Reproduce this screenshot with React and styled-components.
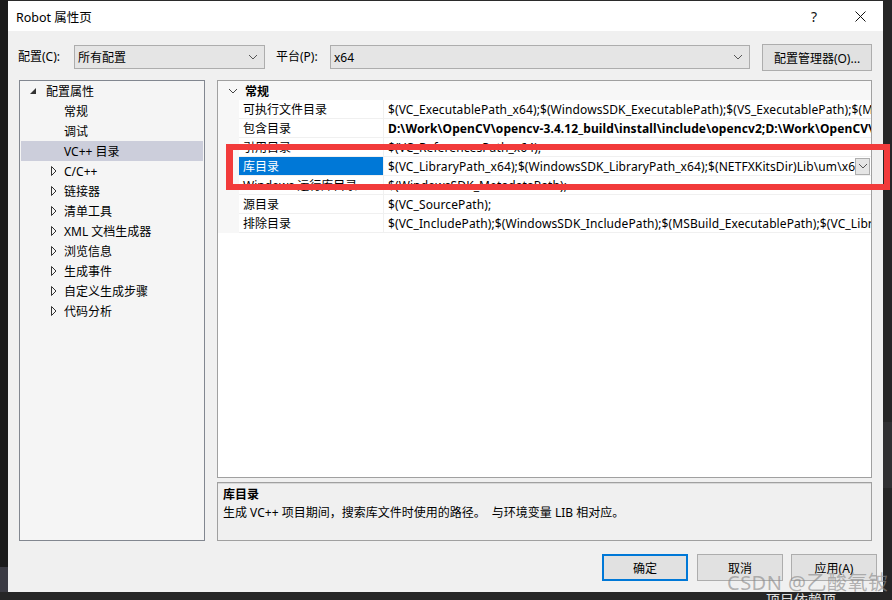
import React from 'react';
import styled, { createGlobalStyle } from 'styled-components';

const Global = createGlobalStyle`
  html, body { margin: 0; padding: 0; background: #1e1e1e; }
  body { font-family: "Noto Sans", "Noto Sans CJK SC", sans-serif; font-size: 12px; color: #000; }
  #root { width: 892px; height: 600px; overflow: hidden; }
`;

const Screen = styled.div`
  position: relative;
  width: 892px;
  height: 600px;
  display: grid;
  grid-template-columns: 8px 875px 1fr;
  grid-template-rows: 592px 8px;
  background: #1e1e1e;
  overflow: hidden;
`;

const LeftStrip = styled.div`
  background: linear-gradient(to bottom, #1b1b1b 0, #1b1b1b 567px, #3b3b43 567px, #3b3b43 100%);
`;

const RightStrip = styled.div`
  background: linear-gradient(to bottom, #262626 0, #262626 422px, #303032 422px, #303032 488px, #262626 488px);
`;

const BottomStrip = styled.div`
  grid-column: 1 / 4;
  background: #262626;
  overflow: hidden;
  padding-left: 766px;
  color: #e0e0e0;
  font-size: 14px;
  line-height: 14px;
`;

const BottomText = styled.div`
  margin-top: 1px;
`;

const Dialog = styled.div`
  display: flex;
  flex-direction: column;
  background: #f0f0f0;
  border-top: 1px solid #2b2b2b;
`;

const TitleBar = styled.div`
  height: 30px;
  background: #fff;
  display: flex;
  align-items: center;
  padding-left: 8px;
  font-size: 12.5px;
`;

const TitleText = styled.div`
  flex: 1;
`;

const TitleButton = styled.div`
  width: 46px;
  height: 30px;
  display: flex;
  align-items: center;
  justify-content: center;
  font-size: 14px;
  color: #111;
`;

const Toolbar = styled.div`
  height: 49px;
  display: flex;
  align-items: flex-start;
  padding: 13px 11px 0 10px;
  box-sizing: border-box;
`;

const Label = styled.div`
  width: ${p => p.$w}px;
  margin-left: ${p => p.$ml || 0}px;
  height: 24px;
  margin-top: 1px;
  line-height: 24px;
  white-space: nowrap;
`;

const Combo = styled.div`
  width: ${p => p.$w}px;
  height: 24px;
  margin-top: 1px;
  box-sizing: border-box;
  border: 1px solid #adadad;
  background: #e5e5e5;
  display: flex;
  align-items: center;
  padding: 0 6px 0 3px;
`;

const ComboText = styled.div`
  flex: 1;
`;

const Button = styled.div`
  width: ${p => p.$w}px;
  height: ${p => p.$h || 27}px;
  margin-left: ${p => p.$ml || 0}px;
  box-sizing: border-box;
  border: ${p => (p.$default ? '2px solid #0078d7' : '1px solid #adadad')};
  background: #e1e1e1;
  display: flex;
  align-items: center;
  justify-content: center;
`;

const Body = styled.div`
  display: flex;
  gap: 12px;
  padding: 0 11px;
  height: 461px;
`;

const Tree = styled.div`
  width: 186px;
  box-sizing: border-box;
  border: 1px solid #828790;
  background: #f5f5f5;
  padding: 0 1px;
`;

const TreeRow = styled.div`
  height: 20px;
  display: flex;
  align-items: center;
  background: ${p => (p.$selected ? '#cccedb' : 'transparent')};
  padding-left: ${p => p.$indent}px;
`;

const TreeArrow = styled.div`
  width: ${p => p.$w}px;
  display: flex;
  align-items: center;
`;

const RightCol = styled.div`
  width: 655px;
  display: flex;
  flex-direction: column;
  gap: 4px;
`;

const GridPanel = styled.div`
  height: 398px;
  box-sizing: border-box;
  border: 1px solid #a0a0a0;
  background: #fff;
  display: flex;
  flex-direction: column;
  overflow: hidden;
`;

const CategoryRow = styled.div`
  height: 19px;
  flex: none;
  display: flex;
  align-items: center;
  background: #f7f7f7;
  font-weight: bold;
`;

const CatChevron = styled.div`
  width: 25px;
  display: flex;
  justify-content: center;
  padding-left: 2px;
`;

const PropRow = styled.div`
  height: 19px;
  flex: none;
  display: flex;
`;

const Gutter = styled.div`
  width: 21px;
  flex: none;
  background: #f7f7f7;
`;

const NameCell = styled.div`
  width: 144px;
  flex: none;
  box-sizing: border-box;
  border-bottom: 1px solid #f0f0f0;
  padding-left: 4px;
  display: flex;
  align-items: center;
  white-space: nowrap;
  overflow: hidden;
  background: ${p => (p.$selected ? '#0078d7' : '#fff')};
  color: ${p => (p.$selected ? '#fff' : '#000')};
`;

const ValueCell = styled.div`
  flex: 1;
  min-width: 0;
  box-sizing: border-box;
  border-bottom: 1px solid #f0f0f0;
  border-left: 1px solid #f0f0f0;
  padding-left: 4px;
  display: flex;
  align-items: center;
  overflow: hidden;
`;

const ValueText = styled.div`
  flex: 1;
  min-width: 0;
  white-space: nowrap;
  overflow: hidden;
  letter-spacing: 0.1px;
  font-weight: ${p => (p.$bold ? 'bold' : 'normal')};
`;

const DropButton = styled.div`
  width: 15px;
  height: 17px;
  flex: none;
  margin-right: 1px;
  box-sizing: border-box;
  border: 1px solid #adadad;
  background: #e5e5e5;
  display: flex;
  align-items: center;
  justify-content: center;
`;

const DescPanel = styled.div`
  height: 59px;
  box-sizing: border-box;
  border: 1px solid #a0a0a0;
  box-shadow: inset 0 1px 0 #d8d8d8;
  background: #f0f0f0;
  padding: 3px 5px;
  line-height: 18px;
  white-space: pre;
`;

const DescTitle = styled.div`
  font-weight: bold;
`;

const Footer = styled.div`
  flex: 1;
  display: flex;
  justify-content: flex-end;
  align-items: flex-start;
  padding: 13px 6px 0 0;
`;

const Watermark = styled.div`
  position: absolute;
  left: 727px;
  top: 567px;
  font-size: 20px;
  color: rgba(140, 140, 140, 0.65);
  letter-spacing: 0.5px;
  white-space: nowrap;
  pointer-events: none;
`;

const RedBox = styled.div`
  position: absolute;
  left: 226px;
  top: 144px;
  width: 664px;
  height: 46px;
  box-sizing: border-box;
  border: 6px solid #f23b3b;
  border-left-width: 7px;
  pointer-events: none;
`;

const Chevron = ({ color = '#555', w = 8, h = 4 }) => (
  <svg width={w + 2} height={h + 2} viewBox={`0 0 ${w + 2} ${h + 2}`}>
    <polyline points={`1,1 ${w / 2 + 1},${h + 1} ${w + 1},1`} fill="none" stroke={color} strokeWidth="1" />
  </svg>
);

const ExpandedArrow = () => (
  <svg width="7" height="7" viewBox="0 0 7 7">
    <polygon points="6,0 6,6 0,6" fill="#333" />
  </svg>
);

const CollapsedArrow = () => (
  <svg width="6" height="10" viewBox="0 0 6 10">
    <polygon points="0.5,0.5 5,5 0.5,9.5" fill="none" stroke="#333" strokeWidth="1" />
  </svg>
);

const CloseIcon = () => (
  <svg width="11" height="11" viewBox="0 0 11 11">
    <path d="M0.5 0.5 L10.5 10.5 M10.5 0.5 L0.5 10.5" stroke="#111" strokeWidth="1" fill="none" />
  </svg>
);

const treeChildren = [
  { t: '常规' },
  { t: '调试' },
  { t: 'VC++ 目录', sel: true },
  { t: 'C/C++', col: true },
  { t: '链接器', col: true },
  { t: '清单工具', col: true },
  { t: 'XML 文档生成器', col: true },
  { t: '浏览信息', col: true },
  { t: '生成事件', col: true },
  { t: '自定义生成步骤', col: true },
  { t: '代码分析', col: true },
];

const props = [
  { n: '可执行文件目录', v: '$(VC_ExecutablePath_x64);$(WindowsSDK_ExecutablePath);$(VS_ExecutablePath);$(MSBuild_ExecutablePath);$(FxCopDir);$(PATH);' },
  { n: '包含目录', v: 'D:\\Work\\OpenCV\\opencv-3.4.12_build\\install\\include\\opencv2;D:\\Work\\OpenCV\\opencv-3.4.12_build\\install\\include;', bold: true },
  { n: '引用目录', v: '$(VC_ReferencesPath_x64);' },
  { n: '库目录', v: '$(VC_LibraryPath_x64);$(WindowsSDK_LibraryPath_x64);$(NETFXKitsDir)Lib\\um\\x64', sel: true },
  { n: 'Windows 运行库目录', v: '$(WindowsSDK_MetadataPath);' },
  { n: '源目录', v: '$(VC_SourcePath);' },
  { n: '排除目录', v: '$(VC_IncludePath);$(WindowsSDK_IncludePath);$(MSBuild_ExecutablePath);$(VC_LibraryPath_x64);' },
];

export default function App() {
  return (
    <>
      <Global />
      <Screen>
        <LeftStrip />
        <Dialog>
          <TitleBar>
            <TitleText>Robot 属性页</TitleText>
            <TitleButton>?</TitleButton>
            <TitleButton><CloseIcon /></TitleButton>
          </TitleBar>
          <Toolbar>
            <Label $w={56}>配置(C):</Label>
            <Combo $w={191}>
              <ComboText>所有配置</ComboText>
              <Chevron />
            </Combo>
            <Label $w={54} $ml={11}>平台(P):</Label>
            <Combo $w={420}>
              <ComboText>x64</ComboText>
              <Chevron />
            </Combo>
            <Button $w={110} $ml={12}>配置管理器(O)...</Button>
          </Toolbar>
          <Body>
            <Tree>
              <TreeRow $indent={9}>
                <TreeArrow $w={16}><ExpandedArrow /></TreeArrow>
                配置属性
              </TreeRow>
              {treeChildren.map(c => (
                <TreeRow key={c.t} $indent={30} $selected={c.sel}>
                  <TreeArrow $w={13}>{c.col ? <CollapsedArrow /> : null}</TreeArrow>
                  {c.t}
                </TreeRow>
              ))}
            </Tree>
            <RightCol>
              <GridPanel>
                <CategoryRow>
                  <CatChevron><Chevron color="#444" w={8} h={4} /></CatChevron>
                  常规
                </CategoryRow>
                {props.map(p => (
                  <PropRow key={p.n}>
                    <Gutter />
                    <NameCell $selected={p.sel}>{p.n}</NameCell>
                    <ValueCell>
                      <ValueText $bold={p.bold}>{p.v}</ValueText>
                      {p.sel ? (
                        <DropButton><Chevron color="#555" w={8} h={4} /></DropButton>
                      ) : null}
                    </ValueCell>
                  </PropRow>
                ))}
              </GridPanel>
              <DescPanel>
                <DescTitle>库目录</DescTitle>
                <div>生成 VC++ 项目期间，搜索库文件时使用的路径。  与环境变量 LIB 相对应。</div>
              </DescPanel>
            </RightCol>
          </Body>
          <Footer>
            <Button $w={86} $default>确定</Button>
            <Button $w={86} $ml={9}>取消</Button>
            <Button $w={86} $ml={8}>应用(A)</Button>
          </Footer>
        </Dialog>
        <RightStrip />
        <BottomStrip><BottomText>项目依赖项</BottomText></BottomStrip>
        <RedBox />
        <Watermark>CSDN @乙酸氧铍</Watermark>
      </Screen>
    </>
  );
}
